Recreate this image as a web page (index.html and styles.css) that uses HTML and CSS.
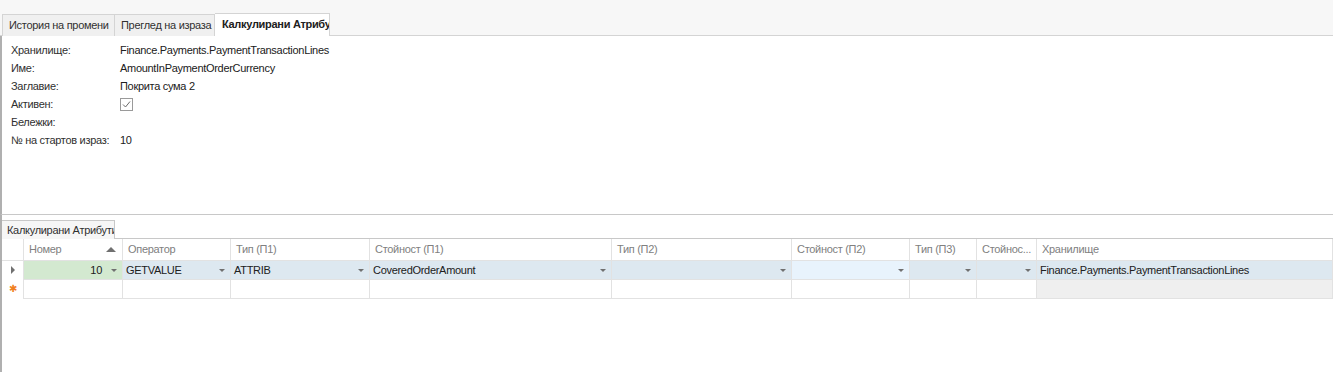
FILE: index.html
```html
<!DOCTYPE html>
<html lang="bg">
<head>
    <meta charset="UTF-8">
    <title>Калкулирани Атрибути</title>
    <link rel="stylesheet" href="styles.css">
</head>
<body>

<div class="tabs">
    <span class="tab t1">История на промени</span>
    <span class="tab t2">Преглед на израза</span>
    <span class="tab t3 active">Калкулирани Атрибути</span>
</div>

<div class="details">
    <div class="field"><span class="key">Хранилище:</span><span class="value">Finance.Payments.PaymentTransactionLines</span></div>
    <div class="field"><span class="key">Име:</span><span class="value">AmountInPaymentOrderCurrency</span></div>
    <div class="field"><span class="key">Заглавие:</span><span class="value">Покрита сума 2</span></div>
    <div class="field"><span class="key">Активен:</span><span class="value"><span class="check"><svg width="11" height="11" viewBox="0 0 11 11"><path d="M2 5.5 L4.5 8 L9 2.5" fill="none" stroke="#6a6a6a" stroke-width="1"/></svg></span></span></div>
    <div class="field"><span class="key">Бележки:</span><span class="value"></span></div>
    <div class="field"><span class="key">№ на стартов израз:</span><span class="value">10</span></div>
</div>

<div class="lower">
    <div class="subtabs"><span class="subtab">Калкулирани Атрибути</span></div>
    <div class="grid">
        <div class="hd ind"></div>
        <div class="hd">Номер<span class="sort"></span></div>
        <div class="hd">Оператор</div>
        <div class="hd">Тип (П1)</div>
        <div class="hd">Стойност (П1)</div>
        <div class="hd">Тип (П2)</div>
        <div class="hd">Стойност (П2)</div>
        <div class="hd">Тип (П3)</div>
        <div class="hd">Стойнос...</div>
        <div class="hd">Хранилище</div>

        <div class="cell ind"><span class="arrow"></span></div>
        <div class="cell row num focus">10<span class="dd"></span></div>
        <div class="cell row">GETVALUE<span class="dd"></span></div>
        <div class="cell row">ATTRIB<span class="dd"></span></div>
        <div class="cell row">CoveredOrderAmount<span class="dd"></span></div>
        <div class="cell row"><span class="dd"></span></div>
        <div class="cell row light"><span class="dd"></span></div>
        <div class="cell row"><span class="dd"></span></div>
        <div class="cell row"><span class="dd"></span></div>
        <div class="cell row">Finance.Payments.PaymentTransactionLines</div>

        <div class="cell ind star">✱</div>
        <div class="cell"></div>
        <div class="cell"></div>
        <div class="cell"></div>
        <div class="cell"></div>
        <div class="cell"></div>
        <div class="cell"></div>
        <div class="cell"></div>
        <div class="cell"></div>
        <div class="cell ro"></div>
    </div>
</div>

</body>
</html>
```

FILE: styles.css
```css
*{padding:0;margin:0;box-sizing:border-box;}
body{font-family:"Liberation Sans",Arial,sans-serif;font-size:11px;letter-spacing:-0.3px;color:#202020;background:#ffffff;width:1333px;height:372px;overflow:hidden;}

.tabs{display:flex;align-items:flex-end;height:36px;padding-left:2px;background:#f7f7f7;border-bottom:1px solid #d4d4d4;}
.tab{height:22px;line-height:21px;padding:0 0 0 6px;background:#f0f0f0;border:1px solid #d4d4d4;border-bottom:none;margin-bottom:-1px;color:#303030;white-space:nowrap;overflow:hidden;}
.tab+.tab{border-left:none;}
.t1{width:113px;}
.t2{width:100px;}
.t3{width:115px;}
.tab.active{background:#ffffff;font-weight:bold;height:23px;padding-left:7px;color:#202020;}

.details{height:179px;border-left:2px solid #b0b0b0;border-bottom:1px solid #c8c8c8;padding:5px 0 0 9px;}
.field{display:flex;height:18px;line-height:18px;white-space:nowrap;}
.key{width:109px;color:#303030;}
.value{color:#202020;}
.check{display:inline-block;width:13px;height:13px;border:1px solid #9a9a9a;margin-top:3px;background:#fff;}
.check svg{display:block;margin:0;}

.lower{height:157px;border-left:2px solid #b0b0b0;}
.subtabs{height:24px;padding-top:5px;border-bottom:1px solid #c8c8c8;}
.subtab{display:inline-block;width:113px;height:19px;line-height:18px;padding-left:5px;border:1px solid #c8c8c8;border-bottom:none;border-left:none;background:#f6f6f6;white-space:nowrap;overflow:hidden;margin-bottom:-1px;color:#303030;}

.grid{display:grid;grid-template-columns:22px 99px 108px 139px 242px 180px 118px 67px 60px 296px;}
.hd{height:22px;line-height:21px;padding-left:5px;color:#808080;border-right:1px solid #e2e2e2;border-bottom:1px solid #e2e2e2;position:relative;white-space:nowrap;overflow:hidden;}
.sort{position:absolute;right:6px;top:8px;width:0;height:0;border-left:5px solid transparent;border-right:5px solid transparent;border-bottom:5px solid #707070;}
.cell{height:19px;line-height:18px;padding-left:3px;border-right:1px solid #e2e2e2;border-bottom:1px solid #e2e2e2;position:relative;white-space:nowrap;overflow:hidden;}
.cell.ind{border-bottom:none;padding:0;}
.row{background:#dde8f0;}
.row.light{background:#e8f3fc;}
.num{text-align:right;padding-right:20px;}
.focus{background:#d3e9d0;}
.ro{background:#efefef;}
.dd{position:absolute;right:5px;top:8px;width:0;height:0;border-left:3px solid transparent;border-right:3px solid transparent;border-top:3px solid #707070;}
.arrow{position:absolute;left:9px;top:5px;width:0;height:0;border-top:4px solid transparent;border-bottom:4px solid transparent;border-left:4px solid #707070;}
.star{color:#f08020;font-size:10px;text-align:center;line-height:18px;}
```
